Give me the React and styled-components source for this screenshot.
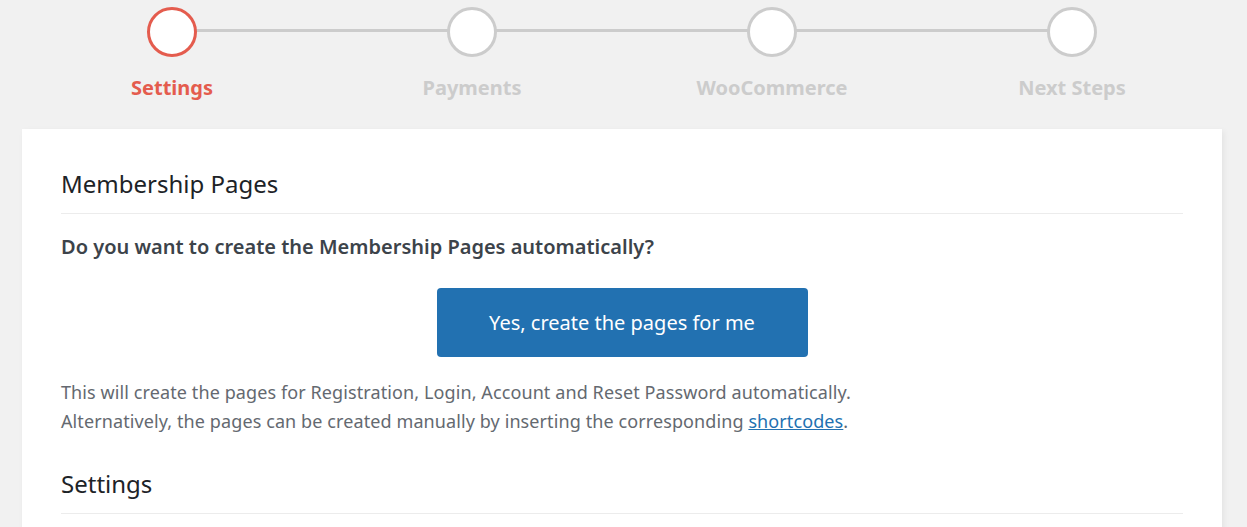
import React from 'react'
import styled, { createGlobalStyle } from 'styled-components';

const Global = createGlobalStyle`
    html, body {
        margin: 0;
        padding: 0;
        background: #f1f1f1;
        font-family: "Noto Sans", "Open Sans", sans-serif;
        overflow: hidden;
    }
`

const Page = styled.div`
    width: 1200px;
    margin-left: 22px;
`

const Steps = styled.ol`
    display: grid;
    grid-template-columns: repeat(4, 1fr);
    list-style: none;
    margin: 0;
    padding: 7px 0 0;
    height: 129px;
    box-sizing: border-box;
`

const Step = styled.li`
    position: relative;
    display: flex;
    flex-direction: column;
    align-items: center;

    &::before {
        content: "";
        display: ${({ $last }) => ($last ? 'none' : 'block')};
        position: absolute;
        top: 22px;
        left: 50%;
        width: 100%;
        height: 3px;
        background: #cccccc;
    }
`

const Dot = styled.span`
    position: relative;
    z-index: 1;
    width: 50px;
    height: 50px;
    box-sizing: border-box;
    border-radius: 50%;
    background: #fff;
    border: 3px solid ${({ $active }) => ($active ? '#e45c4e' : '#cccccc')};
`

const StepLabel = styled.span`
    margin-top: 17px;
    font-size: 20px;
    line-height: 28px;
    font-weight: 700;
    color: ${({ $active }) => ($active ? '#e45c4e' : '#cccccc')};
`

const Card = styled.div`
    background: #fff;
    padding: 39px 39px 0;
    box-shadow: 2px 2px 6px rgba(0, 0, 0, 0.06);
    min-height: 420px;
`

const Heading = styled.h2`
    margin: 0;
    padding-bottom: 13px;
    font-size: 24px;
    line-height: 32px;
    font-weight: 400;
    color: #1d2327;
    border-bottom: 1px solid #ececec;
`

const Question = styled.p`
    margin: 19px 0 27px;
    font-size: 20px;
    line-height: 28px;
    font-weight: 600;
    color: #3c434a;
`

const Center = styled.div`
    display: flex;
    justify-content: center;
`

const Button = styled.button`
    width: 371px;
    height: 69px;
    border: none;
    border-radius: 4px;
    background: #2271b1;
    color: #fff;
    font-family: inherit;
    font-size: 20px;
    cursor: pointer;
`

const Note = styled.p`
    margin: 21px 0 32px;
    font-size: 18px;
    line-height: 29px;
    letter-spacing: 0.1px;
    color: #646970;

    a {
        color: #2271b1;
    }
`

const steps = ['Settings', 'Payments', 'WooCommerce', 'Next Steps'];

const App = () => {
    return (
        <>
            <Global />
            <Page>
                <Steps>
                    {steps.map((s, i) => (
                        <Step key={s} $last={i === steps.length - 1}>
                            <Dot $active={i === 0} />
                            <StepLabel $active={i === 0}>{s}</StepLabel>
                        </Step>
                    ))}
                </Steps>
                <Card>
                    <Heading>Membership Pages</Heading>
                    <Question>Do you want to create the Membership Pages automatically?</Question>
                    <Center>
                        <Button>Yes, create the pages for me</Button>
                    </Center>
                    <Note>
                        This will create the pages for Registration, Login, Account and Reset Password automatically.<br />
                        Alternatively, the pages can be created manually by inserting the corresponding <a href="#">shortcodes</a>.
                    </Note>
                    <Heading>Settings</Heading>
                </Card>
            </Page>
        </>
    )
}

export default App
